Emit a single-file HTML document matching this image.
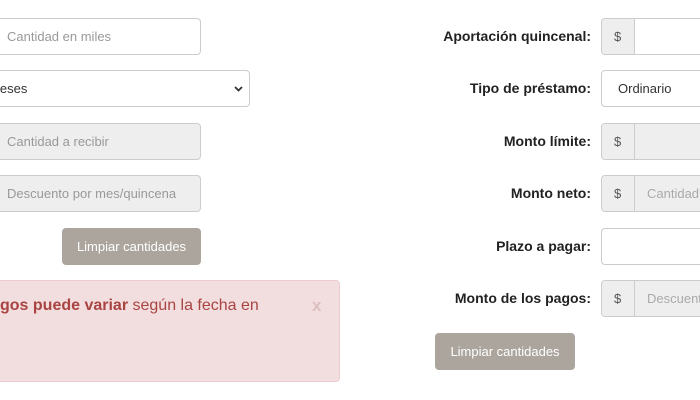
<!DOCTYPE html>
<html><head><meta charset="utf-8"><style>
body{margin:0;width:700px;height:400px;overflow:hidden;background:#fff;font-family:"Liberation Sans",sans-serif;position:relative}
.a{position:absolute;box-sizing:border-box}
.in{border:1px solid #ccc;border-radius:4px;background:#fff;font-size:13px;color:#999;padding-left:10px;display:flex;align-items:center}
.dis{background:#eee}
.btn{background:#aca59d;color:#fff;border-radius:4px;font-size:13px;display:flex;align-items:center;justify-content:center}
.lbl{font-weight:bold;font-size:14px;color:#222;text-align:right;right:109px;line-height:36px}
.grp{left:601px;width:120px;border:1px solid #ccc;border-radius:4px;display:flex;overflow:hidden}
.ad{width:33px;background:#eee;border-right:1px solid #ccc;font-size:13px;color:#555;display:flex;align-items:center;padding-left:12px;box-sizing:border-box}
.fld{flex:1;display:flex;align-items:center;padding-left:12px;font-size:13px;color:#aaa}
</style></head><body>
<div class="a in" style="left:-4px;top:18px;width:205px;height:37px">Cantidad en miles</div>
<div class="a in" style="left:-4px;top:70px;width:254px;height:37px;color:#333;padding-left:0">leses<svg style="position:absolute;right:6px;top:15px" width="9" height="6" viewBox="0 0 9 6"><path d="M1 1l3.5 3.5L8 1" stroke="#333" stroke-width="1.8" fill="none"/></svg></div>
<div class="a in dis" style="left:-4px;top:123px;width:205px;height:37px">Cantidad a recibir</div>
<div class="a in dis" style="left:-4px;top:175px;width:205px;height:37px">Descuento por mes/quincena</div>
<div class="a btn" style="left:62px;top:228px;width:139px;height:37px">Limpiar cantidades</div>
<div class="a" style="left:-10px;top:280px;width:350px;height:102px;background:#f2dede;border-radius:4px;border:1px solid #ebccd1"></div>
<div class="a" style="left:0;top:297px;font-size:16px;color:#a94442"><b>gos puede variar</b> según la fecha en</div>
<div class="a" style="left:312px;top:296px;font-size:17px;color:#dcc0c0;font-weight:bold">x</div>

<div class="a lbl" style="top:18px">Aportación quincenal:</div>
<div class="a grp" style="top:18px;height:37px"><div class="ad">$</div><div class="fld"></div></div>
<div class="a lbl" style="top:70px">Tipo de préstamo:</div>
<div class="a in" style="left:601px;top:70px;width:120px;height:37px;color:#333;padding-left:16px">Ordinario</div>
<div class="a lbl" style="top:123px">Monto límite:</div>
<div class="a grp" style="top:123px;height:37px"><div class="ad">$</div><div class="fld dis"></div></div>
<div class="a lbl" style="top:175px">Monto neto:</div>
<div class="a grp" style="top:175px;height:37px"><div class="ad">$</div><div class="fld dis">Cantidad</div></div>
<div class="a lbl" style="top:228px">Plazo a pagar:</div>
<div class="a in" style="left:601px;top:228px;width:120px;height:37px"></div>
<div class="a lbl" style="top:280px">Monto de los pagos:</div>
<div class="a grp" style="top:280px;height:37px"><div class="ad">$</div><div class="fld dis">Descuento</div></div>
<div class="a btn" style="left:435px;top:333px;width:140px;height:37px">Limpiar cantidades</div>
</body></html>
